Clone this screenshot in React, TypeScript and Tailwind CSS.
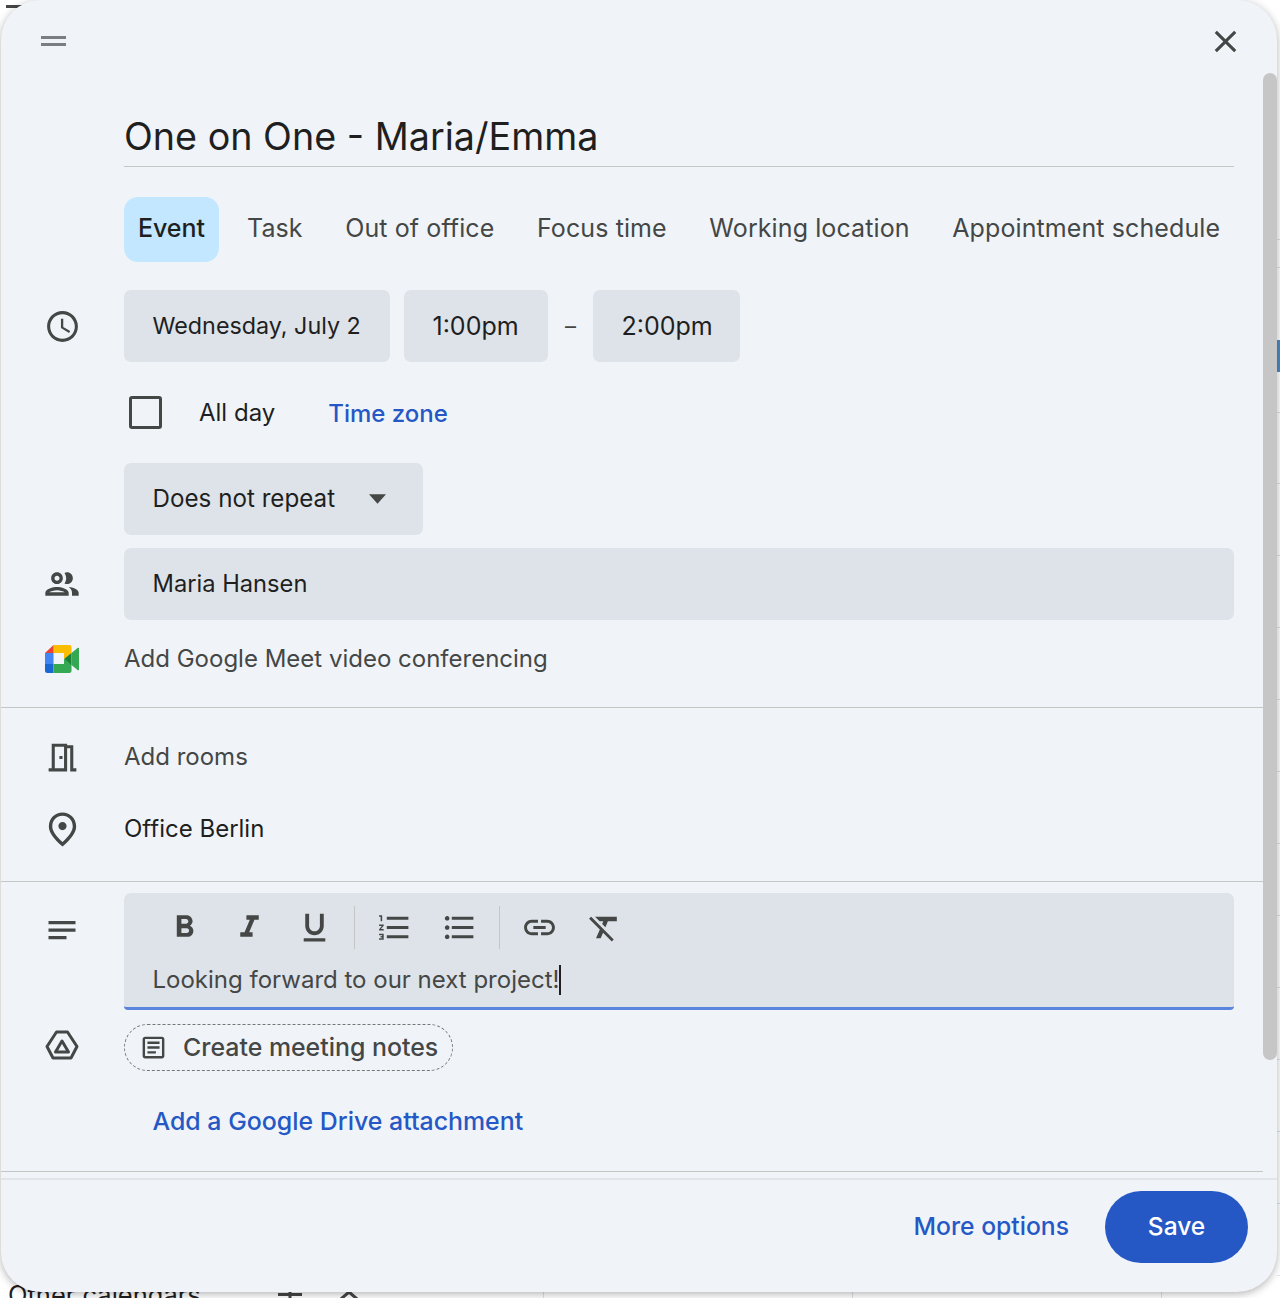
import type { ReactNode } from 'react'

const font = "font-['Inter','Noto_Sans',sans-serif]"

function Icon({ d, size = 37, className = 'text-[#444746]' }: { d: string; size?: number; className?: string }) {
  return (
    <svg width={size} height={size} viewBox="0 0 24 24" fill="currentColor" className={className}>
      <path d={d} />
    </svg>
  )
}

const paths = {
  close: 'M19 6.41L17.59 5 12 10.59 6.41 5 5 6.41 10.59 12 5 17.59 6.41 19 12 13.41 17.59 19 19 17.59 13.41 12z',
  clock: 'M11.99 2C6.47 2 2 6.48 2 12s4.47 10 9.99 10C17.52 22 22 17.52 22 12S17.52 2 11.99 2zM12 20c-4.42 0-8-3.58-8-8s3.58-8 8-8 8 3.58 8 8-3.58 8-8 8zm.5-13H11v6l5.25 3.15.75-1.23-4.5-2.67z',
  people: 'M9 12c1.93 0 3.5-1.57 3.5-3.5S10.93 5 9 5 5.5 6.57 5.5 8.5 7.07 12 9 12zm0-5c.83 0 1.5.67 1.5 1.5S9.83 10 9 10s-1.5-.67-1.5-1.5S8.17 7 9 7zm0 6.75c-2.34 0-7 1.17-7 3.5V19h14v-1.75c0-2.33-4.66-3.5-7-3.5zM4.34 17c.84-.58 2.87-1.25 4.66-1.25s3.82.67 4.66 1.25H4.34zM16.04 13.81c1.16.84 1.96 1.96 1.96 3.44V19h4v-1.75c0-2.02-3.5-3.17-5.96-3.44zM15 12c1.93 0 3.5-1.57 3.5-3.5S16.93 5 15 5c-.54 0-1.04.13-1.5.35.63.89 1 1.98 1 3.15s-.37 2.26-1 3.15c.46.22.96.35 1.5.35z',
  room: 'M19 19V4h-4V3H5v16H3v2h12V6h2v15h4v-2h-2zm-6 0H7V5h6v14zm-3-8h2v2h-2z',
  place: 'M12 12.4c-1.33 0-2.4-1.07-2.4-2.4s1.07-2.4 2.4-2.4 2.4 1.07 2.4 2.4-1.07 2.4-2.4 2.4zm6-2.2C18 6.57 15.35 4 12 4s-6 2.57-6 6.2c0 2.34 1.95 5.44 6 9.14 4.05-3.7 6-6.8 6-9.14zM12 2c4.2 0 8 3.22 8 8.2 0 3.32-2.67 7.25-8 11.8-5.33-4.55-8-8.48-8-11.8C4 5.22 7.8 2 12 2z',
  notes: 'M3 6h18v2.2H3zM3 11h18v2.2H3zM3 16h12v2.2H3z',
  bold: 'M15.6 10.79c.97-.67 1.65-1.77 1.65-2.79 0-2.26-1.75-4-4-4H7v14h7.04c2.09 0 3.71-1.7 3.71-3.79 0-1.52-.86-2.82-2.15-3.42zM10 6.5h3c.83 0 1.5.67 1.5 1.5s-.67 1.5-1.5 1.5h-3v-3zm3.5 9H10v-3h3.5c.83 0 1.5.67 1.5 1.5s-.67 1.5-1.5 1.5z',
  italic: 'M10 4v3h2.21l-3.42 8H6v3h8v-3h-2.21l3.42-8H18V4z',
  underline: 'M12 17c3.31 0 6-2.69 6-6V3h-2.5v8c0 1.93-1.57 3.5-3.5 3.5S8.5 12.93 8.5 11V3H6v8c0 3.31 2.69 6 6 6zm-7 2v2h14v-2H5z',
  numbered: 'M2 17h2v.5H3v1h1v.5H2v1h3v-4H2v1zm1-9h1V4H2v1h1v3zm-1 3h1.8L2 13.1v.9h3v-1H3.2L5 10.9V10H2v1zm5-6v2h14V5H7zm0 14h14v-2H7v2zm0-6h14v-2H7v2z',
  bulleted: 'M4 10.5c-.83 0-1.5.67-1.5 1.5s.67 1.5 1.5 1.5 1.5-.67 1.5-1.5-.67-1.5-1.5-1.5zm0-6c-.83 0-1.5.67-1.5 1.5S3.17 7.5 4 7.5 5.5 6.83 5.5 6 4.83 4.5 4 4.5zm0 12c-.83 0-1.5.68-1.5 1.5s.68 1.5 1.5 1.5 1.5-.68 1.5-1.5-.67-1.5-1.5-1.5zM7 19h14v-2H7v2zm0-6h14v-2H7v2zm0-8v2h14V5H7z',
  link: 'M3.9 12c0-1.71 1.39-3.1 3.1-3.1h4V7H7c-2.76 0-5 2.24-5 5s2.24 5 5 5h4v-1.9H7c-1.71 0-3.1-1.39-3.1-3.1zM8 13h8v-2H8v2zm9-6h-4v1.9h4c1.71 0 3.1 1.39 3.1 3.1s-1.39 3.1-3.1 3.1h-4V17h4c2.76 0 5-2.24 5-5s-2.24-5-5-5z',
  clear: 'M3.27 5L2 6.27l6.97 6.97L6.5 19h3l1.57-3.66L16.73 21 18 19.73 3.55 5.27 3.27 5zM6 5v.18L8.82 8h2.4l-.72 1.68 2.1 2.1L14.21 8H20V5H6z',
  doc: 'M19 5v14H5V5h14m0-2H5c-1.1 0-2 .9-2 2v14c0 1.1.9 2 2 2h14c1.1 0 2-.9 2-2V5c0-1.1-.9-2-2-2zM7 7h10v2H7zM7 11h10v2H7zM7 15h7v2H7z',
}

function MeetLogo() {
  return (
    <svg width="34" height="28" viewBox="0 0 34 28" className="mb-[1px]">
      <path d="M8.5 0H24.500a2 2 0 0 1 2 2v6.500l-7.500 5.500V8H8.500z" fill="#fbbc04" />
      <path d="M8.500 0v8H0z" fill="#ea4335" />
      <path d="M0 8h8.500v11H0z" fill="#4285f4" />
      <path d="M0 19h8.500v9H2.500a2.500 2.500 0 0 1-2.500-2.500z" fill="#1967d2" />
      <path d="M8.500 19H19v-5l7.500 5.500v6a2.500 2.500 0 0 1-2.500 2.500H8.500z" fill="#34a853" />
      <path d="M19 14l7.500-6v12z" fill="#188038" />
      <path d="M26.500 8l5.500-4.500a1 1 0 0 1 2 .5v20a1 1 0 0 1-2 .5l-5.500-4.500z" fill="#34a853" />
    </svg>
  )
}

function DriveIcon() {
  return (
    <svg width="34" height="30" viewBox="0 0 34 30" fill="none" stroke="#444746" strokeWidth="3" strokeLinejoin="round" className="mb-[5px]">
      <path d="M11.500 2h11L32 16.500 26 28H8L2 16.500z" />
      <path d="M17 11l6.500 11h-13z" />
    </svg>
  )
}

function Row({ icon, className = '', children }: { icon?: ReactNode; className?: string; children: ReactNode }) {
  return (
    <div className={`flex ${className}`}>
      <div className="flex w-[123px] shrink-0 items-center justify-center pr-[1px]">{icon}</div>
      <div className="flex min-w-0 flex-1 items-center">{children}</div>
    </div>
  )
}

function Field({ children, className = '' }: { children: ReactNode; className?: string }) {
  return (
    <div className={`flex h-[72px] items-center whitespace-nowrap rounded-[7px] bg-[#dde3e9] pl-[28.500px] pr-[28px] text-[#1f1f1f] ${className}`}>
      {children}
    </div>
  )
}

const tabs = ['Task', 'Out of office', 'Focus time', 'Working location', 'Appointment schedule']
const gridLines = [239, 267, 412, 483, 555, 627, 699, 771, 843, 915, 987, 1059, 1131, 1203, 1275]

export default function App() {
  return (
    <div className={`relative h-[1298px] w-[1280px] overflow-hidden bg-white ${font}`}>
      {/* calendar page showing around the dialog */}
      <div className="absolute left-[6px] top-[5px] h-[3px] w-[20px] bg-[#444746]" />
      <div className="absolute left-[8px] top-[1280px] whitespace-nowrap text-[25.500px] leading-[30px] text-[#1f1f1f]">Other calendars</div>
      <svg width="24" height="8" viewBox="0 0 24 8" className="absolute left-[278px] top-[1290px]" fill="#444746">
        <path d="M0 3h24v3H0zM10.500 0h3v8h-3z" />
      </svg>
      <svg width="20" height="8" viewBox="0 0 20 8" className="absolute left-[339px] top-[1290px]" fill="none" stroke="#444746" strokeWidth="3">
        <path d="M2 9l8-7 8 7" />
      </svg>
      <div className="absolute bottom-0 left-[543px] h-[6px] w-px bg-[#dde3ea]" />
      <div className="absolute bottom-0 left-[852px] h-[6px] w-px bg-[#dde3ea]" />
      <div className="absolute bottom-0 left-[1161px] h-[6px] w-px bg-[#dde3ea]" />
      {gridLines.map((y) => (
        <div key={y} className="absolute right-0 h-px w-[3px] bg-[#dde3ea]" style={{ top: y }} />
      ))}
      <div className="absolute right-0 top-[340px] h-[32px] w-[3px] bg-[#4a8ac4]" />

      {/* dialog */}
      <div className="absolute left-[1px] top-0 flex h-[1292px] w-[1276px] flex-col overflow-hidden rounded-[40px] bg-[#f0f4f8] shadow-[0_2px_8px_rgba(0,0,0,0.3)]">
        <div className="flex-1">
          <div className="flex h-[82px] items-center justify-between pl-[40px] pr-[33px]">
            <div className="flex h-[10px] w-[25px] flex-col justify-between">
              <div className="h-[3px] bg-[#7b7e80]" />
              <div className="h-[3px] bg-[#7b7e80]" />
            </div>
            <Icon d={paths.close} />
          </div>

          <div className="ml-[123px] mr-[43px] flex h-[85px] items-center border-b border-[#c4c7c5] pt-[25px] text-[37.700px] leading-none text-[#1f1f1f]">
            One on One - Maria/Emma
          </div>

          <div className="ml-[123px] mt-[30px] flex h-[65px] items-center text-[25px] tracking-[0.1px] text-[#444746]">
            <div className="flex h-full w-[95px] items-center justify-center rounded-[14px] bg-[#c2e7ff] pb-[2px] font-medium tracking-normal text-[#1f1f1f]">Event</div>
            <div className="ml-[28px] flex gap-[42.600px] pb-[2px]">
              {tabs.map((t) => (
                <span key={t}>{t}</span>
              ))}
            </div>
          </div>

          <Row className="mt-[28px] h-[72px]" icon={<Icon d={paths.clock} />}>
            <Field className="w-[266px] pt-[1px] text-[23.300px]">Wednesday, July 2</Field>
            <Field className="ml-[14px] w-[144px] pt-[2px] text-[25px]">1:00pm</Field>
            <span className="w-[45px] text-center text-[22px] text-[#444746]">–</span>
            <Field className="w-[147px] pt-[2px] text-[25px]">2:00pm</Field>
          </Row>

          <Row className="h-[101px]">
            <div className="ml-[5px] h-[33px] w-[33px] rounded-[3px] border-[3px] border-[#444746]" />
            <span className="ml-[37px] text-[24px] text-[#1f1f1f]">All day</span>
            <span className="ml-[53px] pt-[2px] text-[24px] font-medium text-[#2558c5]">Time zone</span>
          </Row>

          <Row className="h-[72px]">
            <Field className="w-[299px] text-[24.200px]">
              <span>Does not repeat</span>
              <svg width="17" height="10" viewBox="0 0 18 10" className="ml-[34px] text-[#444746]" fill="currentColor">
                <path d="M0 0h18L9 10z" />
              </svg>
            </Field>
          </Row>

          <Row className="mt-[13px] h-[72px]" icon={<Icon d={paths.people} size={40} />}>
            <Field className="mr-[43px] flex-1 text-[23.700px]">Maria Hansen</Field>
          </Row>

          <Row className="h-[78px]" icon={<MeetLogo />}>
            <span className="text-[24px] text-[#444746]">Add Google Meet video conferencing</span>
          </Row>

          <div className="mr-[14px] mt-[9px] border-t border-[#c4c7c5]" />

          <Row className="mt-[13px] h-[72px]" icon={<Icon d={paths.room} />}>
            <span className="text-[24px] text-[#444746]">Add rooms</span>
          </Row>
          <Row className="h-[72px]" icon={<Icon d={paths.place} size={41} />}>
            <span className="text-[24px] text-[#1f1f1f]">Office Berlin</span>
          </Row>

          <div className="mr-[14px] mt-[16px] border-t border-[#c4c7c5]" />

          <div className="mt-[11px] flex">
            <div className="flex w-[123px] shrink-0 justify-center pr-[1px] pt-[19px]">
              <Icon d={paths.notes} size={36} />
            </div>
            <div className="mr-[43px] h-[117px] flex-1 rounded-t-[7px] rounded-b-[4px] border-b-[3px] border-[#5b84dc] bg-[#dde3e9]">
              <div className="flex h-[68px] items-center pl-[42px]">
                <Icon d={paths.bold} />
                <Icon d={paths.italic} className="ml-[28px] text-[#444746]" />
                <Icon d={paths.underline} className="ml-[28px] text-[#444746]" />
                <div className="ml-[21px] h-[43px] w-px bg-[#c4c7c5]" />
                <Icon d={paths.numbered} className="ml-[21px] text-[#444746]" />
                <Icon d={paths.bulleted} className="ml-[28px] text-[#444746]" />
                <div className="ml-[21px] h-[43px] w-px bg-[#c4c7c5]" />
                <Icon d={paths.link} className="ml-[21px] text-[#444746]" />
                <Icon d={paths.clear} className="ml-[28px] text-[#444746]" />
              </div>
              <div className="mt-[3px] flex h-[31px] items-center pl-[28.500px] text-[24px] text-[#444746]">
                Looking forward to our next project!
                <span className="h-[30px] w-[2px] bg-[#1f1f1f]" />
              </div>
            </div>
          </div>

          <Row className="mt-[14px] h-[47px]" icon={<DriveIcon />}>
            <div className="flex h-[47px] w-[329px] items-center rounded-full border border-dashed border-[#747775] pl-[14px] text-[24.900px] font-medium text-[#444746]">
              <Icon d={paths.doc} size={29} />
              <span className="ml-[15px]">Create meeting notes</span>
            </div>
          </Row>

          <div className="ml-[151.500px] mt-[33px] text-[24.900px] font-medium leading-[34px] text-[#2558c5]">Add a Google Drive attachment</div>

          <div className="mr-[14px] mt-[33px] border-t border-[#c4c7c5]" />
        </div>

        <div className="flex h-[114px] items-start justify-end border-t-[2px] border-[#e1e5ea] pr-[29px] pt-[11px]">
          <div className="flex h-[72px] items-center">
            <span className="text-[24.700px] font-medium text-[#2558c5]">More options</span>
            <div className="ml-[36px] flex h-[72px] w-[143px] items-center justify-center rounded-full bg-[#2558c5] pb-[1px] text-[24.500px] font-medium text-white">Save</div>
          </div>
        </div>

        {/* scrollbar thumb */}
        <div className="absolute left-[1262px] top-[73px] h-[987px] w-[14px] rounded-full bg-[#c6c6c6]" />
      </div>
    </div>
  )
}
